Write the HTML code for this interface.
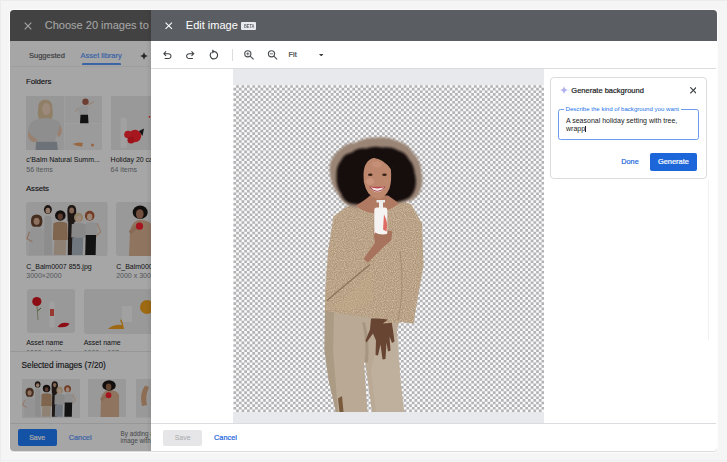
<!DOCTYPE html>
<html><head><meta charset="utf-8">
<style>
*{margin:0;padding:0;box-sizing:border-box}
html,body{width:727px;height:462px;overflow:hidden;background:#f5f5f6;font-family:"Liberation Sans",sans-serif;position:relative}
.a{position:absolute}
.t{position:absolute;white-space:nowrap;line-height:1}
.m{-webkit-text-stroke:0.2px currentColor}
.m2{-webkit-text-stroke:0.12px currentColor}
.th{filter:blur(0.3px)}
.checker{background-color:#f9f9fb;background-image:linear-gradient(45deg,#a8a8ac 25%,transparent 25%,transparent 75%,#a8a8ac 75%),linear-gradient(45deg,#a8a8ac 25%,transparent 25%,transparent 75%,#a8a8ac 75%);background-size:5.5px 5.5px;background-position:0 0,2.75px 2.75px}
</style></head>
<body>
<!-- ===== LEFT (Choose) dialog ===== -->
<div class="a" style="left:0;top:0;width:727px;height:1px;background:#ececef"></div>
<div class="a" style="left:0;top:0;width:1px;height:462px;background:#ececef"></div>
<div class="a" style="left:0;top:459.5px;width:727px;height:1px;background:#efeff1"></div>
<div class="a" style="left:8.5px;top:8.5px;width:709px;height:444px;border-radius:5px;background:#fcfcfc"></div>
<div class="a" style="left:10px;top:10px;width:707.2px;height:441.8px;border-radius:4px;background:#dcdcde"></div>
<div id="choose" class="a" style="left:10px;top:10px;width:706px;height:441px;background:#fff;border-radius:4px;overflow:hidden"></div>
<div class="a" style="left:10px;top:10px;width:141px;height:31px;background:#666666;border-radius:4px 0 0 0"></div>
<svg class="a" style="left:23.5px;top:21.5px" width="8" height="8" viewBox="0 0 8 8"><path d="M0.7 0.7L7.3 7.3M7.3 0.7L0.7 7.3" stroke="#fff" stroke-width="1.1"/></svg>
<div class="t" style="left:44.8px;top:19.8px;font-size:11px;color:#fff">Choose 20 images to add</div>

<div class="t m" style="left:29px;top:51.8px;font-size:7.5px;color:#5f6368">Suggested</div>
<div class="t m" style="left:80.5px;top:51.8px;font-size:7.5px;color:#5b9aff">Asset library</div>
<div class="a" style="left:81.5px;top:62.9px;width:39.5px;height:2.1px;background:#5b9aff;border-radius:1px 1px 0 0"></div>
<div class="a" style="left:10px;top:65.5px;width:141px;height:1px;background:#f3f3f3"></div>
<svg class="a" style="left:139.8px;top:51.8px" width="8" height="8" viewBox="0 0 10 10"><path d="M5 0Q5.7 4.3 10 5Q5.7 5.7 5 10Q4.3 5.7 0 5Q4.3 4.3 5 0Z" fill="#3c4043"/></svg>

<div class="t m2" style="left:26px;top:78.3px;font-size:7.9px;color:#202124;letter-spacing:-0.15px">Folders</div>

<!-- folder 1 -->
<svg class="a th" style="left:25.9px;top:95.9px" width="76" height="54.6" viewBox="0 0 76 54.6">
  <rect width="76" height="54.6" fill="#e9e9e9"/>
  <rect x="38.6" y="0" width="37.4" height="27.4" fill="#ececec"/>
  <rect x="38.6" y="28" width="37.4" height="26.6" fill="#eeeeee"/>
  <rect x="38" y="0" width="0.7" height="54.6" fill="#f8f8f8"/>
  <rect x="38.6" y="27.3" width="37.4" height="0.7" fill="#f8f8f8"/>
  <path d="M12 14Q11.5 3.5 19.5 3.5Q27 4 26.5 13Q27.5 20 25 24L14 24Q11 20 12 14Z" fill="#dec49e"/>
  <ellipse cx="20.3" cy="13" rx="4.2" ry="6" fill="#f0d3bf"/>
  <path d="M2 42Q1 30 6 25.5Q12 22 20 22Q28 22.5 33 25.5Q35.5 30 35 36L31 38L29 45.8L9 45.8L6 42Z" fill="#dadada"/>
  <path d="M2.5 35Q0 44 8 46.5L12 44L6 40Z" fill="#eac6ac"/>
  <path d="M34.5 29Q38 38 32.5 41.5L31 38Z" fill="#eac6ac"/>
  <path d="M10 45.8L31 45.8L32 54.6L9.5 54.6Z" fill="#a6afb8"/>
  <circle cx="59.5" cy="5.8" r="3.2" fill="#a8624e"/>
  <path d="M52 12Q54 9.5 57 9.5L62 10L62 19L54 19Q52 16 52 12Z" fill="#e2e2e2"/>
  <path d="M61.5 9L68 5.5" stroke="#eccab2" stroke-width="1.1"/>
  <path d="M52 12L49.5 15.5" stroke="#eccab2" stroke-width="1.1"/>
  <path d="M54.5 18.8L62 18.8L62.5 27.3L54 27.3Z" fill="#1e1e1e"/>
  <path d="M46.5 48Q52 45.5 57 47L56 50.5Q50 50 46.5 48Z" fill="#e9a066"/>
  <circle cx="66.5" cy="49" r="1.5" fill="#ea9a66"/>
</svg>
<!-- folder 2 -->
<svg class="a th" style="left:111px;top:95.9px" width="60" height="54.6" viewBox="0 0 60 54.6">
  <rect width="60" height="54.6" fill="#ececec"/>
  <rect x="9.7" y="22" width="6" height="29.7" rx="1" fill="#f8f8f8"/>
  <circle cx="24" cy="40" r="6.2" fill="#ff2430"/>
  <circle cx="17" cy="38.5" r="3.8" fill="#ff2834"/>
  <circle cx="20" cy="44" r="3.5" fill="#f01c28"/>
  <path d="M28 35L33 32.5L31.5 40Z" fill="#1e1e1e"/>
  <circle cx="38.5" cy="20.8" r="0.9" fill="#ff3020"/>
</svg>
<div class="t" style="left:26.3px;top:156.1px;font-size:7px;color:#202124">c’Balm Natural Summ...</div>
<div class="t" style="left:26.3px;top:166px;font-size:7px;color:#80868b">56 items</div>
<div class="t" style="left:110.6px;top:156.1px;font-size:7px;color:#202124">Holiday 20 cards</div>
<div class="t" style="left:110.6px;top:166px;font-size:7px;color:#80868b">64 items</div>

<div class="t m2" style="left:26px;top:184.9px;font-size:7.9px;color:#202124;letter-spacing:-0.15px">Assets</div>


<!-- asset 1 group -->
<svg class="a th" style="left:26.3px;top:201.9px;border-radius:3px" width="81.6" height="54.6" viewBox="0 0 82 55" preserveAspectRatio="none">
  <rect width="82" height="55" fill="#ebebeb"/>
  <path d="M42 53.4L42.5 14L48.5 14L49 53.4Z" fill="#2e2622"/>
  <path d="M41.5 9Q41.5 3 45.9 3Q50.5 3 50.5 9L50 20L42 20Z" fill="#2e2420"/>
  <ellipse cx="45.9" cy="8.5" rx="2.4" ry="3" fill="#c89a80"/>
  <path d="M5 19Q5 12.5 10.7 12.5Q16.5 12.5 16.5 19Q16.5 24 14 25L7.5 25Q5 24 5 19Z" fill="#6b4632"/>
  <ellipse cx="10.7" cy="19.5" rx="3" ry="3.6" fill="#dcae94"/>
  <path d="M3 53.4L3.5 30Q6 25.5 10.7 25.5Q15.5 25.5 18 30L17.5 53.4Z" fill="#e4e4e4"/>
  <path d="M3.5 30L1 37L6.5 40" fill="none" stroke="#dcae94" stroke-width="1.3"/>
  <ellipse cx="22" cy="7.6" rx="4" ry="4.5" fill="#2b221f"/>
  <ellipse cx="22" cy="8.8" rx="2.4" ry="2.9" fill="#e2ba9e"/>
  <path d="M18 53.4L18.5 15Q22 12.5 25.5 15L26.5 53.4Z" fill="#d9d9d9"/>
  <circle cx="34.5" cy="13.5" r="5.3" fill="#1e1816"/>
  <ellipse cx="34.5" cy="14.8" rx="2.6" ry="3.1" fill="#8d5d47"/>
  <path d="M27 38.3L27.5 21.5Q34.5 18.5 41.5 21.5L42 38.3Z" fill="#c49a78"/>
  <path d="M28 53.4L28.5 38.3L40.5 38.3L40 53.4Z" fill="#dcc8b3"/>
  <ellipse cx="52.8" cy="15.7" rx="4.5" ry="4.8" fill="#dcc39a"/>
  <ellipse cx="52.8" cy="16.8" rx="2.6" ry="3.2" fill="#efd2bc"/>
  <path d="M45.5 35.8L46 22.5Q52.8 20 60 22.5L60.5 35.8Z" fill="#d3d3d3"/>
  <path d="M46 53.4L46.5 35.8L57.5 35.8L57 53.4Z" fill="#adb7c2"/>
  <ellipse cx="64" cy="13.8" rx="4.8" ry="5" fill="#b05a38"/>
  <ellipse cx="64" cy="15" rx="2.7" ry="3.3" fill="#ecc9b0"/>
  <path d="M60 33.3L60.3 21.5Q64.5 19.5 71.5 21.5L72 33.3Z" fill="#dcdcdc"/>
  <path d="M71.5 21.5L75 30L70 35" fill="none" stroke="#e6c0a6" stroke-width="1.3"/>
  <path d="M59.5 53.4L60 33.3L70.4 33.3L70 53.4Z" fill="#1c1c1c"/>
</svg>
<!-- asset 2 -->
<svg class="a th" style="left:116px;top:202px;border-radius:3px" width="60" height="54.4" viewBox="0 0 60 54.4">
  <rect width="60" height="54.4" fill="#ebebeb"/>
  <path d="M13 54.4L14 28Q17 18 24 18Q32 18 35 22L35 54.4Z" fill="#dcb494"/>
  <path d="M14 31L22 23.5" stroke="#d0a484" stroke-width="4"/>
  <ellipse cx="24.2" cy="10.2" rx="7.5" ry="6.8" fill="#1c1614"/>
  <ellipse cx="23.8" cy="12" rx="3.8" ry="4.8" fill="#b07a60"/>
  <circle cx="23.5" cy="24.2" r="3.6" fill="#ff2030"/>
</svg>
<div class="t" style="left:26.3px;top:263px;font-size:7px;color:#202124">C_Balm0007 855.jpg</div>
<div class="t" style="left:26.3px;top:272.4px;font-size:7px;color:#80868b">3000×2000</div>
<div class="t" style="left:116.2px;top:263px;font-size:7px;color:#202124">C_Balm0008 856.jpg</div>
<div class="t" style="left:116.2px;top:272.4px;font-size:7px;color:#80868b">2000 x 3000</div>

<!-- asset row 2 -->
<svg class="a th" style="left:26.5px;top:288.5px;border-radius:3px" width="48.8" height="44.7" viewBox="0 0 48.8 44.7">
  <rect width="48.8" height="44.7" fill="#ebebeb"/>
  <path d="M10 16L11 31" stroke="#98a070" stroke-width="0.8"/>
  <path d="M10.5 22L14 19" stroke="#6a8040" stroke-width="1"/>
  <circle cx="9.8" cy="12.5" r="4.6" fill="#d8141e"/>
  <rect x="22.3" y="12.5" width="5.4" height="26" rx="1" fill="#f6f6f6"/>
  <rect x="23" y="20" width="4" height="7" fill="#e8584a"/>
  <path d="M30.5 38Q34 32 42.5 34.5Q40 39.5 30.5 38Z" fill="#d8141e"/>
</svg>
<svg class="a th" style="left:83.7px;top:288.5px;border-radius:3px" width="80" height="44.7" viewBox="0 0 80 44.7">
  <rect width="80" height="44.7" fill="#ebebeb"/>
  <rect x="37.6" y="17" width="13.4" height="19.5" fill="#f4f4f4"/>
  <rect x="40" y="23" width="8" height="2" fill="#555"/>
  <circle cx="62" cy="18.5" r="6.8" fill="#f0a020"/>
  <path d="M22.3 41Q26 34 33 34Q36 30 37.6 26L38.3 38Q34 41.5 22.3 41Z" fill="#f0a020"/>
</svg>
<svg class="a th" style="left:83.7px;top:288.5px;border-radius:3px" width="80" height="45" viewBox="0 0 80 45">
  <rect width="80" height="45" fill="#ececec"/>
  <rect x="38" y="17" width="10" height="16" fill="#f8f8f8"/>
  <circle cx="63" cy="18" r="7" fill="#f2a21e"/>
  <path d="M24 40Q30 35 38 36L36 31Q38 28 40 40Z" fill="#f2a21e"/>
</svg>
<div class="t" style="left:26.2px;top:339.1px;font-size:7px;color:#202124">Asset name</div>
<div class="t" style="left:83.7px;top:339.1px;font-size:7px;color:#202124">Asset name</div>
<div class="t" style="left:26.2px;top:348.6px;font-size:7px;color:#80868b">1000 × 667</div>
<div class="t" style="left:83.7px;top:348.6px;font-size:7px;color:#80868b">1000 × 667</div>

<!-- selected section -->
<div class="a" style="left:10px;top:350.5px;width:141px;height:73px;background:#fff;border-top:1px solid #e8e8e8"></div>
<div class="t m2" style="left:21.6px;top:361px;font-size:8.3px;color:#202124;letter-spacing:-0.05px">Selected images (7/20)</div>
<svg class="a th" style="left:21.7px;top:378.7px" width="58.4" height="39" viewBox="0 0 82 55" preserveAspectRatio="none">
  <rect width="82" height="55" fill="#ebebeb"/>
  <path d="M42 53.4L42.5 14L48.5 14L49 53.4Z" fill="#2e2622"/>
  <path d="M41.5 9Q41.5 3 45.9 3Q50.5 3 50.5 9L50 20L42 20Z" fill="#2e2420"/>
  <ellipse cx="45.9" cy="8.5" rx="2.4" ry="3" fill="#c89a80"/>
  <path d="M5 19Q5 12.5 10.7 12.5Q16.5 12.5 16.5 19Q16.5 24 14 25L7.5 25Q5 24 5 19Z" fill="#6b4632"/>
  <ellipse cx="10.7" cy="19.5" rx="3" ry="3.6" fill="#dcae94"/>
  <path d="M3 53.4L3.5 30Q6 25.5 10.7 25.5Q15.5 25.5 18 30L17.5 53.4Z" fill="#e4e4e4"/>
  <path d="M3.5 30L1 37L6.5 40" fill="none" stroke="#dcae94" stroke-width="1.3"/>
  <ellipse cx="22" cy="7.6" rx="4" ry="4.5" fill="#2b221f"/>
  <ellipse cx="22" cy="8.8" rx="2.4" ry="2.9" fill="#e2ba9e"/>
  <path d="M18 53.4L18.5 15Q22 12.5 25.5 15L26.5 53.4Z" fill="#d9d9d9"/>
  <circle cx="34.5" cy="13.5" r="5.3" fill="#1e1816"/>
  <ellipse cx="34.5" cy="14.8" rx="2.6" ry="3.1" fill="#8d5d47"/>
  <path d="M27 38.3L27.5 21.5Q34.5 18.5 41.5 21.5L42 38.3Z" fill="#c49a78"/>
  <path d="M28 53.4L28.5 38.3L40.5 38.3L40 53.4Z" fill="#dcc8b3"/>
  <ellipse cx="52.8" cy="15.7" rx="4.5" ry="4.8" fill="#dcc39a"/>
  <ellipse cx="52.8" cy="16.8" rx="2.6" ry="3.2" fill="#efd2bc"/>
  <path d="M45.5 35.8L46 22.5Q52.8 20 60 22.5L60.5 35.8Z" fill="#d3d3d3"/>
  <path d="M46 53.4L46.5 35.8L57.5 35.8L57 53.4Z" fill="#adb7c2"/>
  <ellipse cx="64" cy="13.8" rx="4.8" ry="5" fill="#b05a38"/>
  <ellipse cx="64" cy="15" rx="2.7" ry="3.3" fill="#ecc9b0"/>
  <path d="M60 33.3L60.3 21.5Q64.5 19.5 71.5 21.5L72 33.3Z" fill="#dcdcdc"/>
  <path d="M71.5 21.5L75 30L70 35" fill="none" stroke="#e6c0a6" stroke-width="1.3"/>
  <path d="M59.5 53.4L60 33.3L70.4 33.3L70 53.4Z" fill="#1c1c1c"/>
</svg>
<svg class="a th" style="left:88.3px;top:379.3px" width="38.1" height="38.1" viewBox="0 0 38 38">
  <rect width="38" height="38" fill="#ebebeb"/>
  <path d="M12.4 38L13 18Q16 11 21 11Q29 11 31 16L31 38Z" fill="#dcb494"/>
  <path d="M13 21L19.5 15.5" stroke="#d0a484" stroke-width="3"/>
  <ellipse cx="21" cy="6.4" rx="6.7" ry="5.2" fill="#1c1614"/>
  <ellipse cx="20.5" cy="8" rx="2.8" ry="3.4" fill="#9a6a50"/>
  <circle cx="20.5" cy="16.2" r="2.9" fill="#ff2030"/>
</svg>
<svg class="a th" style="left:135.5px;top:379px" width="39" height="38.5" viewBox="0 0 39 38.5">
  <rect width="39" height="38.5" fill="#ebebeb"/>
  <path d="M6 27Q3 15 9 6.5L13 8Q9 17 11 26Z" fill="#d9a882"/>
</svg>
<div class="a" style="left:10px;top:422.8px;width:141px;height:1px;background:#e8e8e8"></div>
<div class="a" style="left:17.5px;top:428.8px;width:39.3px;height:17.1px;background:#207eff;border-radius:2px"></div>
<div class="t m" style="left:29.2px;top:433.7px;font-size:7px;color:#fff">Save</div>
<div class="t m" style="left:68.8px;top:433.5px;font-size:7.3px;color:#5b9aff">Cancel</div>
<div class="t" style="left:120.6px;top:431.4px;font-size:6.3px;color:#6a6e72">By adding an</div>
<div class="t" style="left:120.6px;top:438.2px;font-size:6.3px;color:#6a6e72">image with</div>

<!-- scrim -->
<div class="a" style="left:10px;top:10px;width:141px;height:441px;border-radius:4px 0 0 4px;background:rgba(0,0,0,0.35)"></div>

<!-- ===== EDIT dialog ===== -->
<div class="a" style="left:146px;top:10px;width:5px;height:441px;background:linear-gradient(90deg,rgba(0,0,0,0),rgba(0,0,0,0.07))"></div>
<div id="edit" class="a" style="left:151px;top:10px;width:565.5px;height:441px;background:#fff;border-radius:0 4px 4px 0;overflow:hidden">
  <div class="a" style="left:0;top:0;width:566px;height:30.6px;background:#5a5e62"></div>
</div>
<svg class="a" style="left:165px;top:22px" width="7.5" height="7.5" viewBox="0 0 8 8"><path d="M0.6 0.6L7.4 7.4M7.4 0.6L0.6 7.4" stroke="#fff" stroke-width="1.1"/></svg>
<div class="t" style="left:185.8px;top:19.7px;font-size:11px;color:#fff">Edit image</div>
<div class="a" style="left:241.3px;top:22.3px;width:14.9px;height:7.6px;background:#e8eaed;border-radius:1px"></div>
<div class="t" style="left:243.8px;top:24.6px;font-size:4.9px;color:#5f6368;font-weight:bold;transform:scaleX(0.8);transform-origin:0 0">BETA</div>

<!-- toolbar icons -->
<svg class="a" style="left:160.7px;top:48.9px" width="12.6" height="12.6" viewBox="0 -960 960 960"><path d="M280-200v-80h284q63 0 109.5-40T720-420q0-60-46.5-100T564-560H312l104 104-56 56-200-200 200-200 56 56-104 104h252q97 0 166.5 63T800-420q0 94-69.5 157T564-200H280Z" fill="#3c4043"/></svg>
<svg class="a" style="left:183.9px;top:48.9px" width="12.6" height="12.6" viewBox="0 -960 960 960"><path d="M396-200q-97 0-166.5-63T160-420q0-94 69.5-157T396-640h252L544-744l56-56 200 200-200 200-56-56 104-104H396q-63 0-109.5 40T240-420q0 60 46.5 100T396-280h284v80H396Z" fill="#3c4043"/></svg>
<svg class="a" style="left:206px;top:47px" width="16" height="14" viewBox="206 47 16 14"><path d="M211.5 52.4A3.7 3.7 0 1 0 214.6 51.6" fill="none" stroke="#3c4043" stroke-width="1.15"/><path d="M212.2 49.6L215.2 51.5L212.2 53.4Z" fill="#3c4043"/></svg>
<div class="a" style="left:232px;top:49px;width:0.8px;height:11.5px;background:#dadce0"></div>
<svg class="a" style="left:240px;top:46px" width="42" height="16" viewBox="240 46 42 16"><circle cx="247.8" cy="53.8" r="3.1" fill="none" stroke="#4a4e52" stroke-width="1.15"/><path d="M250.1 56.1L253.6 59.4" stroke="#4a4e52" stroke-width="1.15"/><path d="M246.2 53.8H249.4M247.8 52.2V55.4" stroke="#4a4e52" stroke-width="0.8"/><circle cx="271.5" cy="53.8" r="3.1" fill="none" stroke="#4a4e52" stroke-width="1.15"/><path d="M273.8 56.1L277.1 59.4" stroke="#4a4e52" stroke-width="1.15"/><path d="M269.9 53.8H273.1" stroke="#4a4e52" stroke-width="0.8"/></svg>
<div class="t m" style="left:288.6px;top:50.8px;font-size:7.4px;color:#3c4043">Fit</div>
<svg class="a" style="left:319px;top:53.5px" width="4.5" height="2.5" viewBox="0 0 4.5 2.5"><path d="M0 0L4.5 0L2.25 2.5Z" fill="#3c4043"/></svg>
<div class="a" style="left:151px;top:67.8px;width:565px;height:0.8px;background:#dadce0"></div>

<!-- canvas -->
<div class="a" style="left:233px;top:68.5px;width:311px;height:355px;background:#e8e9ed"></div>
<svg class="a" style="left:233px;top:84.5px" width="311" height="327" viewBox="233 84.5 311 327">
  <defs>
    
    <filter id="soft" x="-10%" y="-10%" width="120%" height="120%"><feGaussianBlur stdDeviation="0.5"/></filter>
    <filter id="halo" x="-20%" y="-20%" width="140%" height="140%"><feGaussianBlur stdDeviation="1.3"/></filter>
    <filter id="tex" x="0" y="0" width="100%" height="100%"><feTurbulence type="fractalNoise" baseFrequency="0.9" numOctaves="1" seed="3"/><feColorMatrix values="0 0 0 0 0.85  0 0 0 0 0.75  0 0 0 0 0.62  0 0 0 -2.2 1.4"/><feComposite in2="SourceGraphic" operator="in"/></filter>
    <filter id="blur1" x="-20%" y="-20%" width="140%" height="140%"><feGaussianBlur stdDeviation="0.9"/></filter>
  </defs>
  <rect x="233" y="84.7" width="311" height="327" fill="#fafafb"/>
  <path d="M236.15 86.008H544M236.15 91.240H544M236.15 96.472H544M236.15 101.704H544M236.15 106.936H544M236.15 112.168H544M236.15 117.400H544M236.15 122.632H544M236.15 127.864H544M236.15 133.096H544M236.15 138.328H544M236.15 143.560H544M236.15 148.792H544M236.15 154.024H544M236.15 159.256H544M236.15 164.488H544M236.15 169.720H544M236.15 174.952H544M236.15 180.184H544M236.15 185.416H544M236.15 190.648H544M236.15 195.880H544M236.15 201.112H544M236.15 206.344H544M236.15 211.576H544M236.15 216.808H544M236.15 222.040H544M236.15 227.272H544M236.15 232.504H544M236.15 237.736H544M236.15 242.968H544M236.15 248.200H544M236.15 253.432H544M236.15 258.664H544M236.15 263.896H544M236.15 269.128H544M236.15 274.360H544M236.15 279.592H544M236.15 284.824H544M236.15 290.056H544M236.15 295.288H544M236.15 300.520H544M236.15 305.752H544M236.15 310.984H544M236.15 316.216H544M236.15 321.448H544M236.15 326.680H544M236.15 331.912H544M236.15 337.144H544M236.15 342.376H544M236.15 347.608H544M236.15 352.840H544M236.15 358.072H544M236.15 363.304H544M236.15 368.536H544M236.15 373.768H544M236.15 379.000H544M236.15 384.232H544M236.15 389.464H544M236.15 394.696H544M236.15 399.928H544M236.15 405.160H544M236.15 410.392H544M233.45 88.624H544M233.45 93.856H544M233.45 99.088H544M233.45 104.320H544M233.45 109.552H544M233.45 114.784H544M233.45 120.016H544M233.45 125.248H544M233.45 130.480H544M233.45 135.712H544M233.45 140.944H544M233.45 146.176H544M233.45 151.408H544M233.45 156.640H544M233.45 161.872H544M233.45 167.104H544M233.45 172.336H544M233.45 177.568H544M233.45 182.800H544M233.45 188.032H544M233.45 193.264H544M233.45 198.496H544M233.45 203.728H544M233.45 208.960H544M233.45 214.192H544M233.45 219.424H544M233.45 224.656H544M233.45 229.888H544M233.45 235.120H544M233.45 240.352H544M233.45 245.584H544M233.45 250.816H544M233.45 256.048H544M233.45 261.280H544M233.45 266.512H544M233.45 271.744H544M233.45 276.976H544M233.45 282.208H544M233.45 287.440H544M233.45 292.672H544M233.45 297.904H544M233.45 303.136H544M233.45 308.368H544M233.45 313.600H544M233.45 318.832H544M233.45 324.064H544M233.45 329.296H544M233.45 334.528H544M233.45 339.760H544M233.45 344.992H544M233.45 350.224H544M233.45 355.456H544M233.45 360.688H544M233.45 365.920H544M233.45 371.152H544M233.45 376.384H544M233.45 381.616H544M233.45 386.848H544M233.45 392.080H544M233.45 397.312H544M233.45 402.544H544M233.45 407.776H544" stroke="#b3b3b5" stroke-width="2.616" stroke-dasharray="2.7025 2.7025" fill="none"/>
  <g filter="url(#soft)">
  <!-- pants -->
  <path d="M325 308L345 313L388 318L400 318L397 330L398.2 350L400.5 380L404 411.5L372 411.5L365.2 362L364 362L367.5 411.5L336 411.5L328.7 380L324.5 350Z" fill="#b9a995"/>
  <path d="M325 308L334 312L333 350L338 411.5L336 411.5L328.7 380L324.5 350Z" fill="#a8977f" opacity="0.8"/>
  <path d="M362 322Q367 342 364.6 362L368 362Q370 340 365 322Z" fill="#9f8e7a" opacity="0.7"/>
  <path d="M378 340L398 336L400.5 380L404 411.5L376 411.5L371 370Z" fill="#c3b5a3" opacity="0.6"/>
  <path d="M338 398L342 395.5L343.5 411.5L339.5 411.5Z" fill="#7a5a3e"/>
  <!-- hand on thigh -->
  <path d="M371 318L391 317.5L393 330L394.5 341L392 342.5L389.5 336L390.5 350L388 351L386.5 342L385.5 358.5L382.5 359L380.5 344L378 355L375.5 354.5L376 340L373 333L366.5 342L365.5 340L370 329Z" fill="#684432"/>
  <!-- sweater -->
  <path d="M352 204L344 208L333.5 216L328 251L325 294L325 310L345 314L388 319L383 323L401 321.5L414 323L415 313L423.5 265L422 223L411 203.5L400 200.6L390 206L368 210Z" fill="#b0977a"/>
  <path d="M352 204L344 208L333.5 216L328 251L325 294L325 310L345 314L388 319L383 323L401 321.5L414 323L415 313L423.5 265L422 223L411 203.5L400 200.6L390 206L368 210Z" fill="#d8c0a0" filter="url(#tex)" opacity="0.55"/>
  <path d="M327 300Q348 282 370 264" fill="none" stroke="#7e664c" stroke-width="1.5" opacity="0.75"/>
  <path d="M330 306Q350 300 372 268L372 300L350 312Z" fill="#c4aa88" opacity="0.35"/>
  <path d="M400 250Q405 290 398 320" fill="none" stroke="#8d7458" stroke-width="1" opacity="0.5"/>
  </g>
  <!-- hair halo -->
  <path d="M329.5 168Q330 156 340 149Q346 142 356 142Q364 137 376 137Q388 136 396 140Q408 143 413 152Q421 160 421.5 172Q424 182 419.5 192Q416 199 408 201L390 204L366 207L352 207Q342 203 338 194Q330 184 329.5 168Z" fill="#9a8474" filter="url(#halo)"/>
  <path d="M336.5 176Q336 166 341 160Q344 153 352 152Q358 147 366 148Q374 145 382 147Q392 146 398 150Q406 152 409 159Q414 164 414.5 172Q417 180 415 188Q413 195 408 198Q400 202 390 202L370 203Q360 205 350 203Q343 200 341 193Q336 186 336.5 176Z" fill="#15100d" filter="url(#blur1)"/>
  <g filter="url(#soft)">
  <!-- neck -->
  <path d="M356 205Q366 199 370 195L388 195Q394 199 399 203Q386 213 372 212.5Q362 211 356 205Z" fill="#b07a62"/>
  <!-- face -->
  <path d="M363.5 174Q364 160 373.5 157.5Q385 157 390.8 168Q392 180 389.5 188Q385.5 197 378.6 198.5Q369.5 197 365.8 188Q363 181 363.5 174Z" fill="#bd876e"/>
  <ellipse cx="370" cy="181" rx="4" ry="3.5" fill="#cf9880" opacity="0.7"/><ellipse cx="377" cy="164" rx="5" ry="3" fill="#cc967e" opacity="0.6"/>
  <ellipse cx="387" cy="181" rx="3" ry="3" fill="#c08a72" opacity="0.6"/>
  <path d="M369.5 186.3Q377.3 195.5 385.2 186.3Z" fill="#b8444e"/><path d="M370.5 186.8Q377.3 189 384.2 186.8Q382.5 191.5 377.3 191.8Q372.5 191.5 370.5 186.8Z" fill="#f3e9e6"/>
  <path d="M369.8 186.3Q377.3 195.5 385 186.3" fill="none" stroke="#a2424c" stroke-width="1"/>
  <ellipse cx="370.3" cy="174.3" rx="2.3" ry="1.2" fill="#3a2218"/>
  <ellipse cx="384.5" cy="174.3" rx="2.3" ry="1.2" fill="#3a2218"/>
  <path d="M372 157Q384 158 392 170L393.5 161L382 153Z" fill="#15100d"/>
  <!-- wrist + hand -->
  <path d="M374 226L392.5 231L391 240L384 246L368 262L363.5 258.5L375 242L373.5 234Z" fill="#a8735c"/>
  <!-- bottle -->
  <rect x="374.3" y="207" width="13" height="27.5" rx="2.5" fill="#f5f4f3"/>
  <rect x="379" y="201" width="4" height="7" fill="#eeedec"/>
  <path d="M376.5 199.5L385 199.5L385 202L376.5 202Z" fill="#e9e9e9"/>
  <path d="M384 214Q388.5 222 386.5 231L383 229Z" fill="#d9544a" opacity="0.85"/>
  <path d="M375 232Q382 236 392 232L391.5 236Q382 240 374.5 236Z" fill="#a8735c"/>
  </g>
</svg>

<!-- right panel card -->
<div class="a" style="left:549.5px;top:76.5px;width:157.5px;height:102px;border:0.8px solid #dadce0;border-radius:4px;background:#fff"></div>
<div class="a" style="left:707.5px;top:180px;width:0.7px;height:160px;background:#f1f1f1"></div>
<svg class="a" style="left:559.8px;top:86.3px" width="8" height="8" viewBox="0 0 10 10"><defs><linearGradient id="spk" x1="0" y1="0" x2="1" y2="1"><stop offset="0" stop-color="#e6b9a8"/><stop offset="0.45" stop-color="#b3b4ee"/><stop offset="1" stop-color="#9aa3ee"/></linearGradient></defs><path d="M5 0Q5.8 4.2 10 5Q5.8 5.8 5 10Q4.2 5.8 0 5Q4.2 4.2 5 0Z" fill="url(#spk)"/></svg>
<div class="t m" style="left:571.3px;top:86.7px;font-size:7.5px;color:#202124">Generate background</div>
<svg class="a" style="left:689.5px;top:87px" width="6.6" height="6.6" viewBox="0 0 6.6 6.6"><path d="M0.3 0.3L6.3 6.3M6.3 0.3L0.3 6.3" stroke="#3c4043" stroke-width="1.15"/></svg>
<div class="a" style="left:558px;top:108.8px;width:141px;height:31.5px;border:1.2px solid #6a9cf0;border-radius:2.5px"></div>
<div class="t" style="left:563.5px;top:106px;font-size:6.1px;color:#1a73e8;background:#fff;padding:0 2px">Describe the kind of background you want</div>
<div class="t" style="left:566px;top:117.2px;font-size:7px;color:#202124">A seasonal holiday setting with tree,</div>
<div class="t" style="left:566px;top:125.4px;font-size:7px;color:#202124">wrapp</div>
<div class="a" style="left:584.7px;top:125.5px;width:0.6px;height:6.8px;background:#202124"></div>
<div class="t m" style="left:621.3px;top:158.1px;font-size:7.3px;color:#1c66da">Done</div>
<div class="a" style="left:650.2px;top:153.3px;width:46.9px;height:17.4px;background:#1c66da;border-radius:2px"></div>
<div class="t m" style="left:658px;top:158.1px;font-size:7.4px;color:#fff">Generate</div>

<!-- footer -->
<div class="a" style="left:151px;top:423.3px;width:565px;height:0.8px;background:#dadce0"></div>
<div class="a" style="left:163.3px;top:429.5px;width:38.6px;height:16.6px;background:#e6e6e8;border-radius:2px"></div>
<div class="t" style="left:174.7px;top:434.3px;font-size:7px;color:#a8a9ab">Save</div>
<div class="t m" style="left:214.1px;top:434px;font-size:7.3px;color:#1c66da">Cancel</div>
</body></html>
